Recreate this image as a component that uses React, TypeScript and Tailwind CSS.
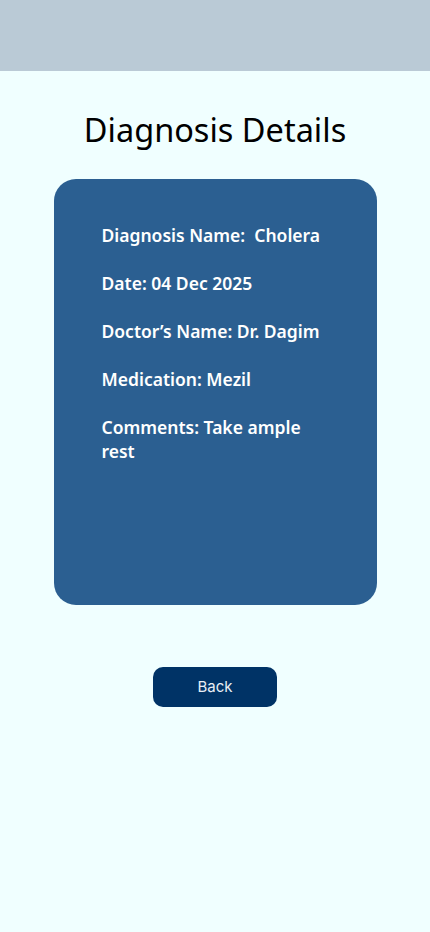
const details = [
  "Diagnosis Name:\u00a0 Cholera",
  "Date: 04 Dec 2025",
  "Doctor\u2019s Name: Dr. Dagim",
  "Medication: Mezil",
  "Comments: Take ample rest",
];

export default function App() {
  return (
    <div className="min-h-[932px] w-full bg-[#f0ffff] flex flex-col items-center font-['Noto_Sans',sans-serif]">
      <div className="h-[71px] w-full bg-[#bacad6]" />

      <h1 className="mt-[39px] text-[32.5px] leading-[40px] text-black">Diagnosis Details</h1>

      <div className="mt-[29px] w-[323px] h-[426px] rounded-[22px] bg-[#2b5f91] pl-12 pt-[44px] flex flex-col gap-6">
        {details.map((line) => (
          <p key={line} className="w-[230px] text-white text-[17.5px] leading-[24px] font-semibold">
            {line}
          </p>
        ))}
      </div>

      <button
        type="button"
        className="mt-[62px] w-[124px] h-10 rounded-[10px] bg-[#003366] text-[#e8eef5] text-[15px] font-['Inter',sans-serif]"
      >
        Back
      </button>
    </div>
  );
}
